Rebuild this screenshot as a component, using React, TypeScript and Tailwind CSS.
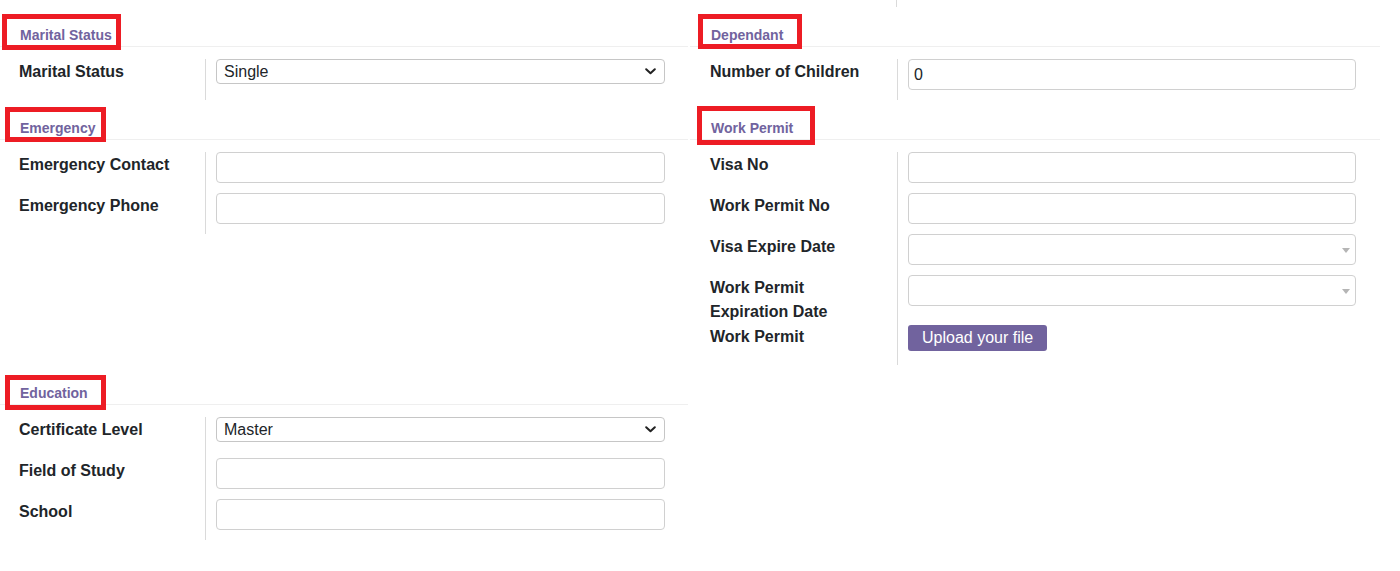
import React from 'react';

type Field = {
  label: string;
  kind: 'select' | 'text' | 'date' | 'upload';
  value?: string;
};

type Section = {
  title: string;
  boxClass: string;
  fields: Field[];
};

const ChevronIcon = () => (
  <svg width="11" height="7" viewBox="0 0 11 7" className="absolute right-[9px] top-[9px]">
    <path d="M1.2 1.2 L5.5 5.3 L9.8 1.2" fill="none" stroke="#222" strokeWidth="2" strokeLinecap="round" strokeLinejoin="round" />
  </svg>
);

const FieldControl: React.FC<{ field: Field }> = ({ field }) => {
  if (field.kind === 'select') {
    return (
      <div className="relative">
        <div className="h-[25px] w-full rounded-[4px] border border-[#c6c6c6] bg-white pl-[7px] text-[16px] leading-[23px] text-[#212529]">
          {field.value}
        </div>
        <ChevronIcon />
      </div>
    );
  }
  if (field.kind === 'upload') {
    return (
      <button className="mt-[1px] h-[26px] rounded-[3px] bg-[#71639e] px-[14px] text-[16px] leading-[26px] text-white">
        Upload your file
      </button>
    );
  }
  return (
    <div className="relative">
      <div className="h-[31px] w-full rounded-[4px] border border-[#d0d0d0] bg-white pl-[5px] text-[16px] leading-[29px] text-[#212529]">
        {field.value}
      </div>
      {field.kind === 'date' && (
        <span className="absolute right-[6px] top-[14px] h-0 w-0 border-x-[4px] border-t-[5px] border-x-transparent border-t-[#b5b5b5]" />
      )}
    </div>
  );
};

const SectionBlock: React.FC<{ section: Section; right?: boolean }> = ({ section, right }) => (
  <div className="relative">
    <div
      className={`h-[40px] border-b border-[#efefef] pt-[20px] text-[14px] font-bold leading-[16px] text-[#71639e] ${
        right ? 'pl-[21px]' : 'pl-[20px]'
      }`}
    >
      {section.title}
    </div>
    <span className={`absolute border-[5px] border-[#ed1c24] ${section.boxClass}`} />
    <div className="mt-[12px]">
      {section.fields.map((f) => (
        <div key={f.label} className="flex">
          <div
            className={`shrink-0 pt-[1px] pr-[30px] text-[16px] font-bold leading-[24px] text-[#212529] ${
              right ? 'w-[207px] pl-[20px]' : 'w-[205px] pl-[19px]'
            }`}
          >
            {f.label}
          </div>
          <div className={`min-h-[41px] flex-1 border-l border-[#dadada] pb-[10px] pl-[10px] ${right ? 'pr-[24px]' : 'pr-[23px]'}`}>
            <FieldControl field={f} />
          </div>
        </div>
      ))}
    </div>
  </div>
);

const rows: [Section, Section | null][] = [
  [
    {
      title: 'Marital Status',
      boxClass: 'left-[2px] top-[7px] w-[119px] h-[36px]',
      fields: [{ label: 'Marital Status', kind: 'select', value: 'Single' }],
    },
    {
      title: 'Dependant',
      boxClass: 'left-[8px] top-[7px] w-[104px] h-[35px]',
      fields: [{ label: 'Number of Children', kind: 'text', value: '0' }],
    },
  ],
  [
    {
      title: 'Emergency',
      boxClass: 'left-[5px] top-[7px] w-[101px] h-[35px]',
      fields: [
        { label: 'Emergency Contact', kind: 'text' },
        { label: 'Emergency Phone', kind: 'text' },
      ],
    },
    {
      title: 'Work Permit',
      boxClass: 'left-[7px] top-[6px] w-[118px] h-[39px]',
      fields: [
        { label: 'Visa No', kind: 'text' },
        { label: 'Work Permit No', kind: 'text' },
        { label: 'Visa Expire Date', kind: 'date' },
        { label: 'Work Permit Expiration Date', kind: 'date' },
        { label: 'Work Permit', kind: 'upload' },
      ],
    },
  ],
  [
    {
      title: 'Education',
      boxClass: 'left-[5px] top-[10px] w-[101px] h-[35px]',
      fields: [
        { label: 'Certificate Level', kind: 'select', value: 'Master' },
        { label: 'Field of Study', kind: 'text' },
        { label: 'School', kind: 'text' },
      ],
    },
    null,
  ],
];

export default function App() {
  return (
    <div className="min-h-[571px] w-[1400px] bg-white font-['Liberation_Sans',Arial,sans-serif]">
      <div className="grid grid-cols-[688px_690px] gap-x-[2px]">
        {/* tail of the group above */}
        <div className="h-[7px]" />
        <div className="h-[7px]">
          <div className="h-full w-[207px] border-r border-[#dadada]" />
        </div>
        {rows.map(([left, right], i) => (
          <React.Fragment key={i}>
            <SectionBlock section={left} />
            {right ? <SectionBlock section={right} right /> : <div />}
          </React.Fragment>
        ))}
      </div>
    </div>
  );
}
